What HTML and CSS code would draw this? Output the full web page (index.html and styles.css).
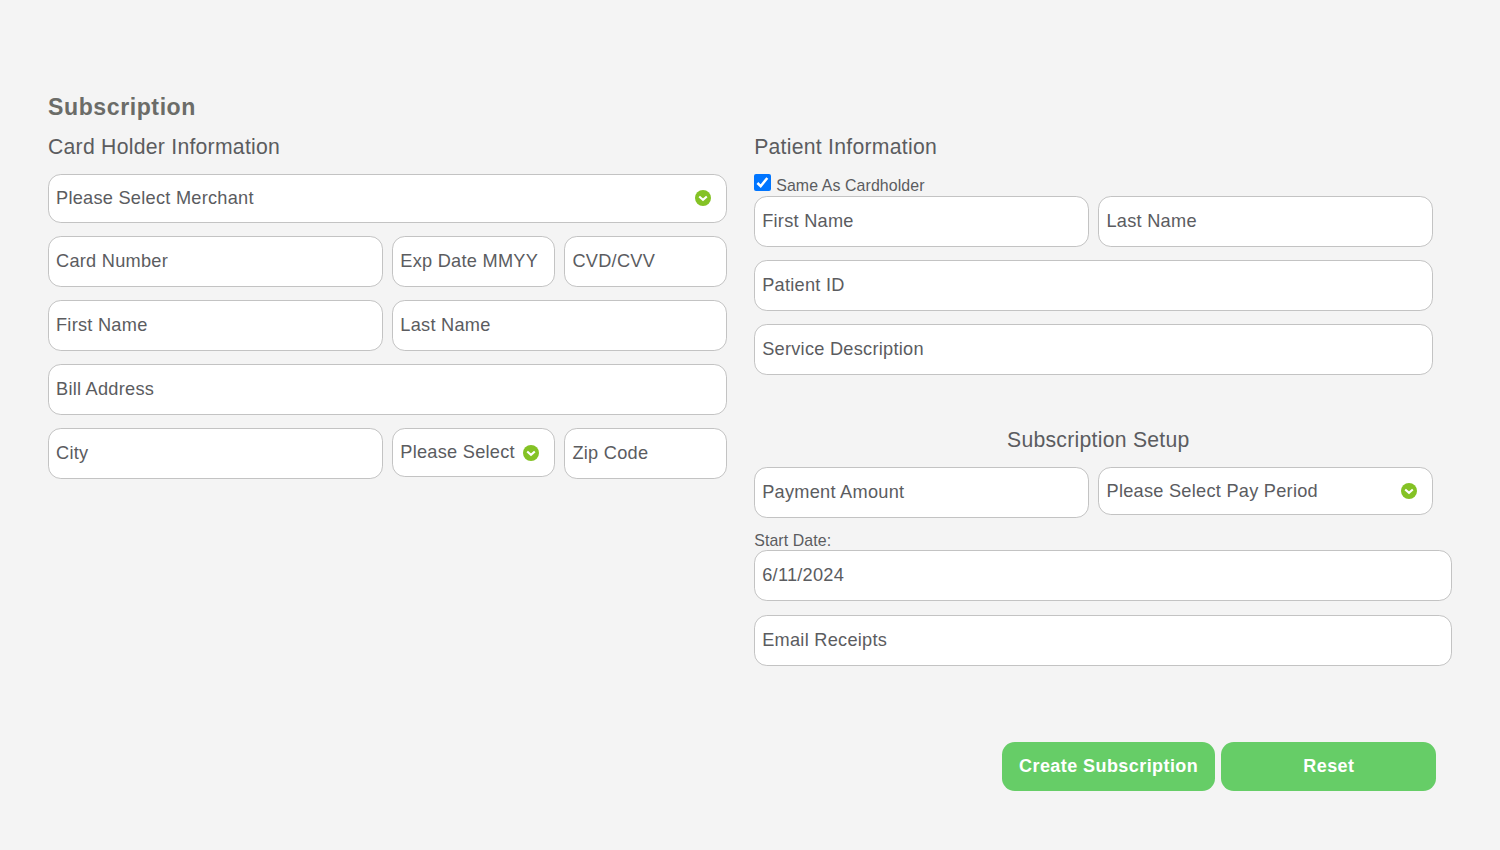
FILE: index.html
```
<!DOCTYPE html>
<html lang="en">
<head>
<meta charset="utf-8">
<title>Subscription</title>
<link rel="stylesheet" href="styles.css">
</head>
<body>
<svg class="defs" width="0" height="0"><symbol id="chevron" viewBox="0 0 16 16"><circle cx="8" cy="8" r="8" fill="#84c225"/><path d="M4.2 6.5 8 9.9l3.8-3.4" fill="none" stroke="#fff" stroke-width="2.1"/></symbol></svg>
<form class="page">
  <h1 class="title">Subscription</h1>
  <div class="columns">
    <section class="column">
      <h2 class="heading">Card Holder Information</h2>
      <div class="row row-first"><div class="field select">Please Select Merchant<svg class="chevron"><use href="#chevron"/></svg></div></div>
      <div class="row row-split"><div class="field">Card Number</div><div class="field">Exp Date MMYY</div><div class="field">CVD/CVV</div></div>
      <div class="row row-half"><div class="field">First Name</div><div class="field">Last Name</div></div>
      <div class="row"><div class="field">Bill Address</div></div>
      <div class="row row-split"><div class="field">City</div><div class="field select select-state">Please Select<svg class="chevron"><use href="#chevron"/></svg></div><div class="field">Zip Code</div></div>
    </section>
    <section class="column">
      <h2 class="heading">Patient Information</h2>
      <div class="check"><svg class="checkbox" viewBox="0 0 17 17"><rect width="17" height="17" rx="2" fill="#0075ff"/><path d="M3.4 9 6.7 12.2 13.3 4" fill="none" stroke="#fff" stroke-width="2.5"/></svg><span class="check-label">Same As Cardholder</span></div>
      <div class="row row-half"><div class="field">First Name</div><div class="field">Last Name</div></div>
      <div class="row"><div class="field">Patient ID</div></div>
      <div class="row"><div class="field">Service Description</div></div>
      <h2 class="heading heading-setup">Subscription Setup</h2>
      <div class="row row-half"><div class="field">Payment Amount</div><div class="field select">Please Select Pay Period<svg class="chevron"><use href="#chevron"/></svg></div></div>
      <div class="date-label">Start Date:</div>
      <div class="row row-wide"><div class="field">6/11/2024</div></div>
      <div class="row row-wide"><div class="field">Email Receipts</div></div>
      <div class="actions"><button type="button" class="button button-create">Create Subscription</button><button type="button" class="button button-reset">Reset</button></div>
    </section>
  </div>
</form>
</body>
</html>
```
FILE: styles.css
```
* { box-sizing: border-box; }
body {
  margin: 0;
  background: #f4f4f4;
  color: #5b5c5f;
  font-family: "Liberation Sans", Arial, sans-serif;
  font-size: 18.2px;
  letter-spacing: 0.26px;
}
.defs { display: block; }
.page { padding: 92px 48px 0; }
.title {
  margin: 0;
  height: 41px;
  line-height: 30px;
  font-size: 23.1px;
  letter-spacing: 0.57px;
  color: #6b6c68;
}
.columns { display: flex; gap: 27px; }
.column { width: 679.2px; flex: none; }
.heading {
  margin: 0;
  height: 41px;
  line-height: 28px;
  font-size: 21.2px;
  font-weight: 400;
  letter-spacing: 0.26px;
}
.row { display: grid; gap: 9.3px; align-items: start; margin-bottom: 13.2px; }
.row-split { grid-template-columns: 335px 162.8px 162.8px; }
.row-half { grid-template-columns: 335px 335px; }
.row-wide { width: 697.5px; }
.field {
  height: 51px;
  display: flex;
  align-items: center;
  padding: 0 7px;
  border: 1px solid #c3c3c3;
  border-radius: 12.8px;
  background: #fff;
  white-space: nowrap;
}
.select { height: 48.6px; justify-content: space-between; padding-right: 15px; }
.select-state { height: 48.4px; }
.chevron { width: 16px; height: 16px; flex: none; }
.check { display: flex; height: 22px; }
.checkbox { width: 17px; height: 17px; margin-right: 5px; }
.check-label { font-size: 15.9px; letter-spacing: 0.1px; line-height: 24px; }
.heading-setup { margin-top: 50.4px; text-align: center; padding-left: 9px; }
.date-label { font-size: 15.9px; letter-spacing: 0.1px; line-height: 19.4px; }
.actions { display: flex; justify-content: flex-end; gap: 6px; margin: 76px -3px 0 0; }
.button {
  height: 49px;
  padding: 0;
  border: 0;
  border-radius: 12.8px;
  background: #66cd67;
  color: #fff;
  font: bold 18px "Liberation Sans", Arial, sans-serif;
  letter-spacing: 0.43px;
}
.button-create { width: 213.5px; }
.button-reset { width: 215px; }
```
